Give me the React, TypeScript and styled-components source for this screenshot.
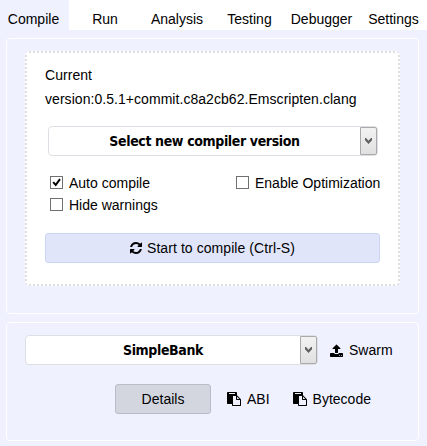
import React from "react";
import styled, { createGlobalStyle } from "styled-components";

const GlobalStyle = createGlobalStyle`
  * { box-sizing: border-box; }
  body {
    margin: 0;
    background: #fff;
    color: #000;
    font: 14px/24px "Liberation Sans", Arial, sans-serif;
    white-space: nowrap;
  }
`;

const Page = styled.div`
  height: 446px;
  display: flex;
  flex-direction: column;
  background: #eff1ff;
  overflow: hidden;
`;

const TabBar = styled.nav`
  display: flex;
  height: 30px;
  background: #fff;
`;

const Tab = styled.div<{ $width: number; $active?: boolean }>`
  width: ${(p) => p.$width}px;
  flex: none;
  padding: 7px ${(p) => (p.$active ? 2 : 0)}px 0 0;
  text-align: center;
  background: ${(p) => (p.$active ? "#eff1ff" : "transparent")};
`;

const Panel = styled.section<{ $height: number }>`
  width: 413px;
  height: ${(p) => p.$height}px;
  margin: 8px 0 0 6px;
  flex: none;
  border: 1px solid #fff;
  border-radius: 4px;
  padding: 12px 18px;
`;

const dots = (dir: string) =>
  `repeating-linear-gradient(${dir}, #dfdfdf 0 2px, #fff 2px 4px)`;

const CompilerBox = styled.div`
  width: 375px;
  height: 235px;
  border-radius: 5px;
  padding: 12px 20px;
  background:
    ${dots("to right")} 0 0 / 100% 2px no-repeat,
    ${dots("to right")} 0 100% / 100% 2px no-repeat,
    ${dots("to bottom")} 0 0 / 2px 100% no-repeat,
    ${dots("to bottom")} 100% 0 / 2px 100% no-repeat,
    #fff;
`;

const Dropdown = styled.div<{ $width: number; $indent?: number }>`
  display: flex;
  width: ${(p) => p.$width}px;
  height: 30px;
  margin-left: ${(p) => p.$indent ?? 0}px;
  border: 1px solid #dedfe4;
  border-radius: 4px;
  background: #fff;
`;

const DropdownLabel = styled.span`
  flex: 1;
  text-align: center;
  font: bold 14px/28px "DejaVu Sans Condensed", "DejaVu Sans", sans-serif;
  font-stretch: condensed;
  letter-spacing: -0.37px;
`;

const DropdownArrow = styled.span`
  display: flex;
  align-items: center;
  justify-content: center;
  width: 17px;
  height: 28px;
  border: 1px solid #aaa;
  border-radius: 0 2px 2px 0;
  background: linear-gradient(#f2f2f2, #e0e0e0);
`;

const Options = styled.div`
  display: grid;
  grid-template-columns: 186px auto;
  grid-auto-rows: 22px;
  margin: 16px 0 0 5px;
`;

const Option = styled.label`
  display: flex;
  align-items: center;
  gap: 6px;
  height: 22px;
`;

const CheckBox = styled.span`
  display: flex;
  width: 13px;
  height: 13px;
  margin-top: -1px;
  border: 1px solid #707070;
  background: #fff;
`;

const Button = styled.button<{ $width: number; $muted?: boolean }>`
  display: flex;
  align-items: center;
  justify-content: center;
  gap: 5px;
  width: ${(p) => p.$width}px;
  height: 30px;
  padding: 0;
  font: inherit;
  letter-spacing: ${(p) => (p.$muted ? 0 : 0.07)}px;
  color: #000;
  border: 1px solid ${(p) => (p.$muted ? "#b9bdc8" : "#ced6f8")};
  border-radius: 3px;
  background: ${(p) => (p.$muted ? "#d3d6df" : "#e0e5f9")};
`;

const CompileRow = styled.div`
  margin-top: 17px;
`;

const ContractRow = styled.div`
  display: flex;
  align-items: center;
  gap: 12px;
`;

const ActionRow = styled.div`
  display: flex;
  align-items: center;
  margin: 19px 0 0 90px;
`;

const Action = styled.span<{ $before?: number }>`
  display: flex;
  align-items: center;
  gap: 6px;
  margin-left: ${(p) => p.$before ?? 0}px;
`;

const Icon = styled.svg`
  display: block;
  flex: none;
  fill: currentColor;
`;

const RefreshIcon = () => (
  <Icon width="12" height="12" viewBox="0 0 1536 1536">
    <path d="M1511 928q0 5-1 7-64 268-268 434.5t-478 166.5q-146 0-282.5-55t-243.5-157l-129 129q-19 19-45 19t-45-19-19-45v-448q0-26 19-45t45-19h448q26 0 45 19t19 45-19 45l-137 137q71 66 161 102t187 36q134 0 250-65t186-179q11-17 53-117 8-23 30-23h192q13 0 22.5 9.5t9.5 22.5zm25-800v448q0 26-19 45t-45 19h-448q-26 0-45-19t-19-45 19-45l138-138q-148-137-349-137-134 0-250 65t-186 179q-11 17-53 117-8 23-30 23h-199q-13 0-22.5-9.5t-9.5-22.5v-7q65-268 270-434.5t480-166.5q146 0 284 55.5t245 156.5l130-129q19-19 45-19t45 19 19 45z" />
  </Icon>
);

const UploadIcon = () => (
  <Icon width="13" height="13" viewBox="0 0 1664 1664">
    <path d="M1280 1472q0-26-19-45t-45-19-45 19-19 45 19 45 45 19 45-19 19-45zm256 0q0-26-19-45t-45-19-45 19-19 45 19 45 45 19 45-19 19-45zm128-224v320q0 40-28 68t-68 28h-1472q-40 0-68-28t-28-68v-320q0-40 28-68t68-28h427q21 56 70.5 92t110.5 36h256q61 0 110.5-36t70.5-92h427q40 0 68 28t28 68zm-325-648q-17 40-59 40h-256v448q0 26-19 45t-45 19h-256q-26 0-45-19t-19-45v-448h-256q-42 0-59-40-17-39 14-69l448-448q18-19 45-19t45 19l448 448q31 30 14 69z" />
  </Icon>
);

const PasteIcon = () => (
  <Icon width="14" height="14" viewBox="0 0 1792 1792">
    <path d="M768 1664h896v-640h-416q-40 0-68-28t-28-68v-416h-384v1152zm256-1440v-64q0-13-9.5-22.5t-22.5-9.5h-704q-13 0-22.5 9.5t-9.5 22.5v64q0 13 9.5 22.5t22.5 9.5h704q13 0 22.5-9.5t9.5-22.5zm256 672h299l-299-299v299zm512 128v672q0 40-28 68t-68 28h-960q-40 0-68-28t-28-68v-160h-544q-40 0-68-28t-28-68v-1344q0-40 28-68t68-28h1088q40 0 68 28t28 68v328q21 13 36 28l408 408q28 28 48 76t20 88z" />
  </Icon>
);

const Chevron = () => (
  <Icon width="7" height="6" viewBox="0 0 7 6">
    <path d="M0 0h1l2.5 2.8L6 0h1v2.2L3.5 6 0 2.2z" fill="#606060" />
  </Icon>
);

const CheckMark = () => (
  <Icon width="11" height="11" viewBox="0 0 11 11">
    <path d="M2.2 5.2 4.7 8 9 2.2" fill="none" stroke="#000" strokeWidth="2" />
  </Icon>
);

const Select = ({ label, width, indent }: { label: string; width: number; indent?: number }) => (
  <Dropdown $width={width} $indent={indent}>
    <DropdownLabel>{label}</DropdownLabel>
    <DropdownArrow>
      <Chevron />
    </DropdownArrow>
  </Dropdown>
);

const VersionText = styled.div`
  margin-bottom: 15px;
  letter-spacing: 0.05px;
`;

const tabs = [
  { name: "Compile", width: 69 },
  { name: "Run", width: 72 },
  { name: "Analysis", width: 72 },
  { name: "Testing", width: 73 },
  { name: "Debugger", width: 71 },
  { name: "Settings", width: 73 },
];

export default function App() {
  return (
    <>
      <GlobalStyle />
      <Page>
        <TabBar>
          {tabs.map((tab, i) => (
            <Tab key={tab.name} $width={tab.width} $active={i === 0}>
              {tab.name}
            </Tab>
          ))}
        </TabBar>
        <Panel $height={276}>
          <CompilerBox>
            <VersionText>
              Current
              <br />
              version:0.5.1+commit.c8a2cb62.Emscripten.clang
            </VersionText>
            <Select label="Select new compiler version" width={330} indent={3} />
            <Options>
              <Option>
                <CheckBox>
                  <CheckMark />
                </CheckBox>
                Auto compile
              </Option>
              <Option>
                <CheckBox />
                Enable Optimization
              </Option>
              <Option>
                <CheckBox />
                Hide warnings
              </Option>
            </Options>
            <CompileRow>
              <Button $width={335}>
                <RefreshIcon />
                Start to compile (Ctrl-S)
              </Button>
            </CompileRow>
          </CompilerBox>
        </Panel>
        <Panel $height={119}>
          <ContractRow>
            <Select label="SimpleBank" width={293} />
            <Action>
              <UploadIcon />
              Swarm
            </Action>
          </ContractRow>
          <ActionRow>
            <Button $width={96} $muted>
              Details
            </Button>
            <Action $before={16}>
              <PasteIcon />
              ABI
            </Action>
            <Action $before={23}>
              <PasteIcon />
              Bytecode
            </Action>
          </ActionRow>
        </Panel>
      </Page>
    </>
  );
}
